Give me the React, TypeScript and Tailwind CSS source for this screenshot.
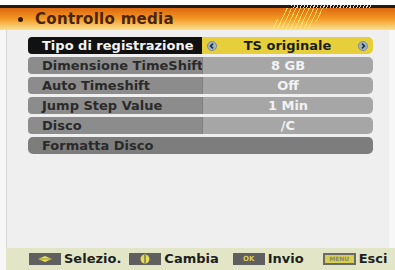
import React from "react";

type Row = { label: string; value?: string };

const rows: Row[] = [
  { label: "Dimensione TimeShift", value: "8 GB" },
  { label: "Auto Timeshift", value: "Off" },
  { label: "Jump Step Value", value: "1 Min" },
  { label: "Disco", value: "/C" },
];

const font = { fontFamily: '"DejaVu Sans", Verdana, sans-serif' };

function ArrowDot({ dir }: { dir: "left" | "right" }) {
  return (
    <svg width="10" height="10" viewBox="0 0 10 10">
      <circle cx="5" cy="5" r="4.6" fill="#9fb3c4" stroke="#5d7487" strokeWidth="0.6" />
      {dir === "left" ? (
        <path d="M6 2.6 L3.6 5 L6 7.4" fill="none" stroke="#1f2f3d" strokeWidth="1.6" />
      ) : (
        <path d="M4 2.6 L6.4 5 L4 7.4" fill="none" stroke="#1f2f3d" strokeWidth="1.6" />
      )}
    </svg>
  );
}

function KeyIcon({ kind }: { kind: "updown" | "leftright" | "ok" | "menu" }) {
  if (kind === "menu") {
    return (
      <div className="flex h-[12px] w-[33px] items-center justify-center border-2 border-[#6a6a6a] bg-[#d8cf52] text-[6px] font-bold leading-none text-[#8a8a6a]">
        MENU
      </div>
    );
  }
  return (
    <div className="flex h-[12px] w-[32px] items-center justify-center bg-[#5f5f5f]">
      {kind === "updown" && (
        <svg width="18" height="8" viewBox="0 0 18 8">
          <path d="M2 4 L9 1 L16 4 L9 7 Z" fill="#e6dc58" />
          <path d="M3 4 L15 4" stroke="#6e6a30" strokeWidth="0.6" />
        </svg>
      )}
      {kind === "leftright" && (
        <svg width="10" height="10" viewBox="0 0 10 10">
          <circle cx="5" cy="5" r="4.5" fill="#e6dc58" />
          <path d="M5 1 L5 9" stroke="#5f5f5f" strokeWidth="1.2" />
        </svg>
      )}
      {kind === "ok" && <span className="text-[7px] font-bold leading-none text-[#d8cc50]">OK</span>}
    </div>
  );
}

export default function App() {
  return (
    <div className="flex h-[270px] w-[395px] flex-col overflow-hidden bg-[#f7f7f7]" style={font}>
      <div className="h-[5px] bg-white" />
      <div className="relative flex h-[25px] items-center border-t-[3px] border-[#1c1c1c] bg-gradient-to-b from-[#dc6810] via-[#f39a22] to-[#f8e28a] pl-[18px]">
        <div className="absolute -top-[3px] right-[22px] h-[3px] w-[82px] bg-[repeating-linear-gradient(115deg,#d8d8d8_0px,#d8d8d8_1px,transparent_1px,transparent_3px)]" />
        <div className="absolute right-[68px] top-0 h-[22px] w-[58px] bg-[repeating-linear-gradient(115deg,rgba(255,236,90,0.8)_0px,rgba(255,236,90,0.8)_1px,transparent_1px,transparent_4px)] [clip-path:polygon(30%_0,100%_0,70%_100%,0_100%)]" />
        <span className="mr-[12px] h-[5px] w-[5px] rounded-full bg-[#3a1c05]" />
        <span className="text-[15px] font-bold tracking-[0.3px] text-[#4a2408]">Controllo media</span>
      </div>
      <div className="ml-[6px] mr-[6px] flex flex-1 flex-col gap-[3px] border-l border-[#d6d6d6] bg-[#efefef] pl-[21px] pr-[16px] pt-[7px]">
        <div className="flex h-[17px] text-[13px] font-bold leading-none">
          <div className="flex w-[174px] items-center whitespace-nowrap rounded-l-[4px] bg-[#111111] pl-[14px] text-[#f4f4f4]">
            Tipo di registrazione
          </div>
          <div className="flex flex-1 items-center justify-between rounded-r-[5px] bg-[#e6cf3a] px-[5px] text-[#1c1c10]">
            <ArrowDot dir="left" />
            <span>TS originale</span>
            <ArrowDot dir="right" />
          </div>
        </div>
        {rows.map((row) => (
          <div key={row.label} className="flex h-[17px] text-[13px] font-bold leading-none">
            <div className="flex w-[174px] items-center overflow-hidden whitespace-nowrap rounded-l-[4px] bg-[#8c8c8c] pl-[14px] text-[#2a2a2a]">
              {row.label}
            </div>
            <div className="flex flex-1 items-center justify-center rounded-r-[5px] border-l border-[#7e7e7e] bg-[#a6a6a6] text-[#f2f2f2]">
              {row.value}
            </div>
          </div>
        ))}
        <div className="flex h-[17px] items-center rounded-[5px] bg-[#7d7d7d] pl-[14px] text-[13px] font-bold leading-none text-[#2a2a2a]">
          Formatta Disco
        </div>
      </div>
      <div className="ml-[6px] flex h-[22px] items-center bg-[#e3e6c6] pl-[23px] text-[13px] font-bold text-[#1e1e1e]">
        <KeyIcon kind="updown" />
        <span className="ml-[3px]">Selezio.</span>
        <div className="ml-[8px]">
          <KeyIcon kind="leftright" />
        </div>
        <span className="ml-[3px]">Cambia</span>
        <div className="ml-[14px]">
          <KeyIcon kind="ok" />
        </div>
        <span className="ml-[3px]">Invio</span>
        <div className="ml-[19px]">
          <KeyIcon kind="menu" />
        </div>
        <span className="ml-[3px]">Esci</span>
      </div>
    </div>
  );
}
